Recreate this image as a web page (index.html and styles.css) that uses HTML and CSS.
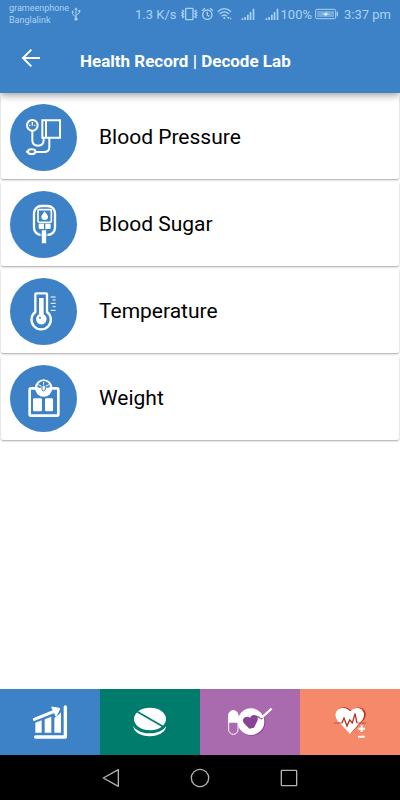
FILE: index.html
```html
<!DOCTYPE html>
<html lang="en">
<head>
  <meta charset="UTF-8">
  <meta name="viewport" content="width=device-width, initial-scale=1.0">
  <title>Health Record | Decode Lab</title>
  <link rel="stylesheet" href="styles.css">
</head>
<body>

  <!-- Header -->
  <header>
    <div class="status-bar">
      <div class="carriers">
        <span>grameenphone</span>
        <span>Banglalink</span>
      </div>
      <svg class="usb" width="10" height="14" viewBox="0 0 30 42">
        <path d="M15 4V36M15 30L5 22V15M15 25L25 18V12" fill="none" stroke="currentColor" stroke-width="3"/>
        <path d="M10 8L15 1L20 8Z" fill="currentColor"/>
        <circle cx="15" cy="36" r="5" fill="currentColor"/>
        <circle cx="5" cy="14" r="3" fill="currentColor"/>
        <path d="M22 9h6v6h-6z" fill="currentColor"/>
      </svg>
      <div class="status-right">
        <span>1.3 K/s</span>
        <svg class="vibrate" width="17" height="14" viewBox="0 0 51 42">
          <rect x="14" y="4" width="22" height="34" rx="2" fill="none" stroke="currentColor" stroke-width="4"/>
          <path d="M3 9l5 4-5 4 5 4-5 4 5 4-5 4M47 9l-5 4 5 4-5 4 5 4-5 4 5 4" fill="none" stroke="currentColor" stroke-width="4"/>
        </svg>
        <svg class="alarm" width="13" height="14" viewBox="0 0 39 42">
          <circle cx="19" cy="23" r="14" fill="none" stroke="currentColor" stroke-width="4"/>
          <path d="M19 14v10l6 4M3 11l9-7M36 11l-9-7" fill="none" stroke="currentColor" stroke-width="4"/>
        </svg>
        <svg class="wifi" width="15" height="14" viewBox="0 0 45 42">
          <path d="M2 14Q22-4 42 14M8 21Q22 8 36 21M14 28Q22 20 30 28" fill="none" stroke="currentColor" stroke-width="4"/>
          <path d="M18 33l4 4 4-4-4-4zM30 30l4 7 4-7zM38 37l3-6 3 6z" fill="currentColor"/>
        </svg>
        <svg class="signal" width="14" height="14" viewBox="0 0 42 42">
          <path d="M2 34h5v5H2zM10 30h5v9h-5zM18 23h5v16h-5zM26 15h5v24h-5zM35 5h5v34h-5z" fill="currentColor"/>
        </svg>
        <svg class="signal-two" width="14" height="14" viewBox="0 0 42 42">
          <path d="M2 34h5v5H2zM10 30h5v9h-5zM18 23h5v16h-5zM26 15h5v24h-5zM35 5h5v34h-5z" fill="currentColor"/>
        </svg>
        <span>100%</span>
        <svg class="battery" width="24" height="12" viewBox="0 0 72 36">
          <rect x="2" y="4" width="60" height="28" rx="4" fill="none" stroke="currentColor" stroke-width="3"/>
          <rect x="7" y="9" width="50" height="18" fill="currentColor" opacity="0.5"/>
          <path d="M65 11h4v14h-4z" fill="currentColor"/>
          <path d="M20 18l11-2 3-6 1 6 9 2-9 2-3 6-2-6z" fill="#e4f2ff"/>
        </svg>
        <span>3:37 pm</span>
      </div>
    </div>
    <div class="app-bar">
      <button class="back" aria-label="Back">
        <svg width="20" height="20" viewBox="0 0 60 60">
          <path d="M57 30H6M31 5L6 30L31 55" fill="none" stroke="currentColor" stroke-width="6"/>
        </svg>
      </button>
      <h1>Health Record | Decode Lab</h1>
    </div>
  </header>

  <!-- Record list -->
  <main>
    <a class="card" href="#pressure">
      <svg class="icon" viewBox="30 25 201 201">
        <g fill="none" stroke="currentColor" stroke-width="6">
          <circle cx="97" cy="89" r="16"/>
          <path d="M97 79v11M88 88l3 2M106 88l-3 2" stroke-width="4"/>
          <path d="M127 74h53v52h-53zM138 74v52"/>
          <path d="M97 106v27q0 17 17 17t17-17v-7M148 127v26q0 16-16 16h-27M78 168h6"/>
          <ellipse cx="95" cy="168" rx="11" ry="7"/>
        </g>
      </svg>
      <span>Blood Pressure</span>
    </a>
    <a class="card" href="#sugar">
      <svg class="icon" viewBox="30 30 201 201">
        <rect x="102" y="75" width="63" height="87" rx="22" fill="none" stroke="currentColor" stroke-width="7"/>
        <rect x="114" y="86" width="40" height="38" rx="4" fill="none" stroke="currentColor" stroke-width="5"/>
        <path d="M134 91q10 13 10 17a10 9 0 0 1-20 0q0-4 10-17z" fill="currentColor"/>
        <path d="M116 128h16v16h-12q-4 0-4-4zM136 128h16v12q0 4-4 4h-12zM125 148h14v39h-14z" fill="currentColor"/>
        <path d="M123 150v36M141 150v36" stroke="#3d82c6" stroke-width="3"/>
      </svg>
      <span>Blood Sugar</span>
    </a>
    <a class="card" href="#temperature">
      <svg class="icon" viewBox="30 25 201 201">
        <path d="M106 74q0-3 3-3h29q3 0 3 3v53a29 29 0 1 1-35 0z" fill="none" stroke="currentColor" stroke-width="7"/>
        <path d="M117 85h14v49a16 16 0 1 1-14 0z" fill="currentColor"/>
        <circle cx="120" cy="144" r="3" fill="#3d82c6"/>
        <path d="M152 82h15M158 91h9M152 101h15M158 111h9M152 122h15" stroke="currentColor" stroke-width="3"/>
      </svg>
      <span>Temperature</span>
    </a>
    <a class="card" href="#weight">
      <svg class="icon" viewBox="30 25 201 201">
        <rect x="89" y="95" width="86" height="82" rx="4" fill="none" stroke="currentColor" stroke-width="8"/>
        <circle cx="131" cy="94" r="26" fill="currentColor"/>
        <path d="M112 92a19 19 0 0 1 38 0l-10 2q-1-8-9-8t-9 8z" fill="#3d82c6"/>
        <path d="M131 76v18M115 84l9 4M147 84l-9 4" stroke="currentColor" stroke-width="3"/>
        <path d="M126 87q5-3 10 0v13q-5 5-10 0z" fill="none" stroke="#3d82c6" stroke-width="3"/>
        <path d="M103 125h19q4 0 4 4v31q0 4-4 4h-19q-4 0-4-4v-31q0-4 4-4zM139 125h16q4 0 4 4v31q0 4-4 4h-16q-4 0-4-4v-31q0-4 4-4z" fill="currentColor"/>
      </svg>
      <span>Weight</span>
    </a>
  </main>

  <!-- Bottom tabs -->
  <nav class="tabs">
    <button class="tab tab-chart" aria-label="Reports">
      <svg width="100" height="66" viewBox="0 28 300 198">
        <path d="M103 119L165 94" fill="none" stroke="currentColor" stroke-width="9" stroke-linecap="round"/>
        <path d="M155 82l23 4q2 1 1 3l-11 21z" fill="currentColor" stroke="currentColor" stroke-width="3" stroke-linejoin="round"/>
        <path d="M106 129l19-7v37h-19zM134 119l20-8v48h-20zM163 115l12-9 8-8v61h-20z" fill="currentColor"/>
        <path d="M107 172h88M196 82v90" fill="none" stroke="currentColor" stroke-width="10" stroke-linecap="round"/>
      </svg>
    </button>
    <button class="tab tab-pill" aria-label="Medicine">
      <svg width="100" height="66" viewBox="300 28 300 198">
        <ellipse cx="449" cy="139" rx="49" ry="31" fill="currentColor"/>
        <ellipse cx="449" cy="126" rx="53" ry="35" fill="#007c6c"/>
        <ellipse cx="450" cy="118" rx="48" ry="34" fill="currentColor"/>
        <path d="M412 96L490 141" stroke="#007c6c" stroke-width="5"/>
      </svg>
    </button>
    <button class="tab tab-diet" aria-label="Diet">
      <svg width="100" height="66" viewBox="0 28 300 198">
        <rect x="86" y="94" width="28" height="70" rx="14" fill="none" stroke="currentColor" stroke-width="3"/>
        <path d="M85 129v-22a15 15 0 0 1 30 0v22z" fill="currentColor"/>
        <circle cx="156" cy="128" r="40" fill="#874494"/>
        <circle cx="153" cy="126" r="40" fill="currentColor"/>
        <path d="M148 147L132 131q-8-12 3-18 10-4 15 2 4-11 15-9 12 4 7 18l-10 20z" fill="#874494"/>
        <path d="M168 109l17 8 30-27" fill="none" stroke="#874494" stroke-width="4"/>
        <path d="M181 112h6l28-25" fill="none" stroke="currentColor" stroke-width="7"/>
      </svg>
    </button>
    <button class="tab tab-heart" aria-label="Vitals">
      <svg width="100" height="66" viewBox="300 28 300 198">
        <path d="M454 160L416 119q-14-20 1-32 19-12 37 6 17-16 34-6 17 12 5 32z" fill="#b83421"/>
        <path d="M450 163L411 121q-11-21 4-32 18-12 36 6 16-17 33-6 15 12 3 32z" fill="currentColor"/>
        <path d="M402 130h24M472 130h26" stroke="#a85f50" stroke-width="3"/>
        <path d="M426 130l6-15 9 24 8-18 8 9 8-28 6 28" fill="none" stroke="#b83421" stroke-width="4"/>
        <path d="M475 149h20M485 139v20M474 171h20" stroke="#f5896a" stroke-width="10"/>
        <path d="M475 147h20M485 137v20M474 171h20" stroke="currentColor" stroke-width="6"/>
      </svg>
    </button>
  </nav>

  <!-- System navigation -->
  <div class="system-bar">
    <button aria-label="System back">
      <svg width="18" height="20" viewBox="0 0 54 60">
        <path d="M49 5v50L4 30z" fill="none" stroke="currentColor" stroke-width="4" stroke-linejoin="round"/>
      </svg>
    </button>
    <button aria-label="Home">
      <svg width="20" height="20" viewBox="0 0 60 60">
        <circle cx="30" cy="30" r="26" fill="none" stroke="currentColor" stroke-width="4"/>
      </svg>
    </button>
    <button aria-label="Recent apps">
      <svg width="18" height="18" viewBox="0 0 54 54">
        <rect x="4" y="4" width="46" height="46" rx="2" fill="none" stroke="currentColor" stroke-width="4"/>
      </svg>
    </button>
  </div>

</body>
</html>
```

FILE: styles.css
```css
* {
  box-sizing: border-box;
}

body {
  margin: 0;
  min-height: 100vh;
  display: flex;
  flex-direction: column;
  font-family: Roboto, 'Liberation Sans', sans-serif;
  background: white;
  color: black;
}

button {
  padding: 0;
  border: none;
  background: none;
  color: inherit;
  cursor: pointer;
}

svg {
  display: block;
  flex: none;
}

header {
  position: relative;  /* Keeps the shadow above the first card */
  z-index: 1;
  background: #3d82c6;
  color: white;
  box-shadow: 0 2px 8px rgba(0, 0, 0, 0.4);
}

.status-bar {
  display: flex;
  align-items: center;
  height: 28px;
  padding: 0 9px;
  color: #a9d2f5;
}

.carriers {
  display: flex;
  flex-direction: column;
  font-size: 9px;
  line-height: 12px;
}

.usb {
  margin-left: 2px;
}

.status-right {
  display: flex;
  align-items: center;
  margin-left: auto;
  font-size: 13px;
  white-space: nowrap;
}

.vibrate {
  margin-left: 4px;
}

.alarm {
  margin-left: 3px;
}

.wifi {
  margin-left: 3px;
}

.signal {
  margin-left: 9px;
}

.signal-two {
  margin: 0 2px 0 10px;
}

.battery {
  margin: 0 5px 0 3px;
}

.app-bar {
  display: flex;
  align-items: center;
  height: 65px;
  padding: 0 21px;
}

.back {
  margin: 0 39px 6px 0;
}

h1 {
  margin: 0;
  font-size: 17px;
  font-weight: bold;
}

main {
  flex: 1;
  display: flex;
  flex-direction: column;
  gap: 3px;
  padding: 2px 1px;
}

.card {
  display: flex;
  align-items: center;
  gap: 22px;
  height: 84px;
  padding: 0 9px;
  border-radius: 2px;
  background: white;
  color: black;
  font-size: 21px;
  text-decoration: none;
  box-shadow: 0 1px 2px rgba(0, 0, 0, 0.35);
}

.icon {
  width: 67px;
  height: 67px;
  border-radius: 50%;
  background: #3d82c6;
  color: white;
}

.tabs {
  display: grid;
  grid-template-columns: repeat(4, 1fr);
}

.tab {
  display: flex;
  justify-content: center;
  color: white;
}

.tab-chart {
  background: #3d82c6;
}

.tab-pill {
  background: #007c6c;
}

.tab-diet {
  background: #a96bae;
}

.tab-heart {
  background: #f5896a;
}

.system-bar {
  display: flex;
  justify-content: center;
  align-items: center;
  gap: 70px;
  height: 45px;
  background: black;
  color: #b4b4b4;
}
```
